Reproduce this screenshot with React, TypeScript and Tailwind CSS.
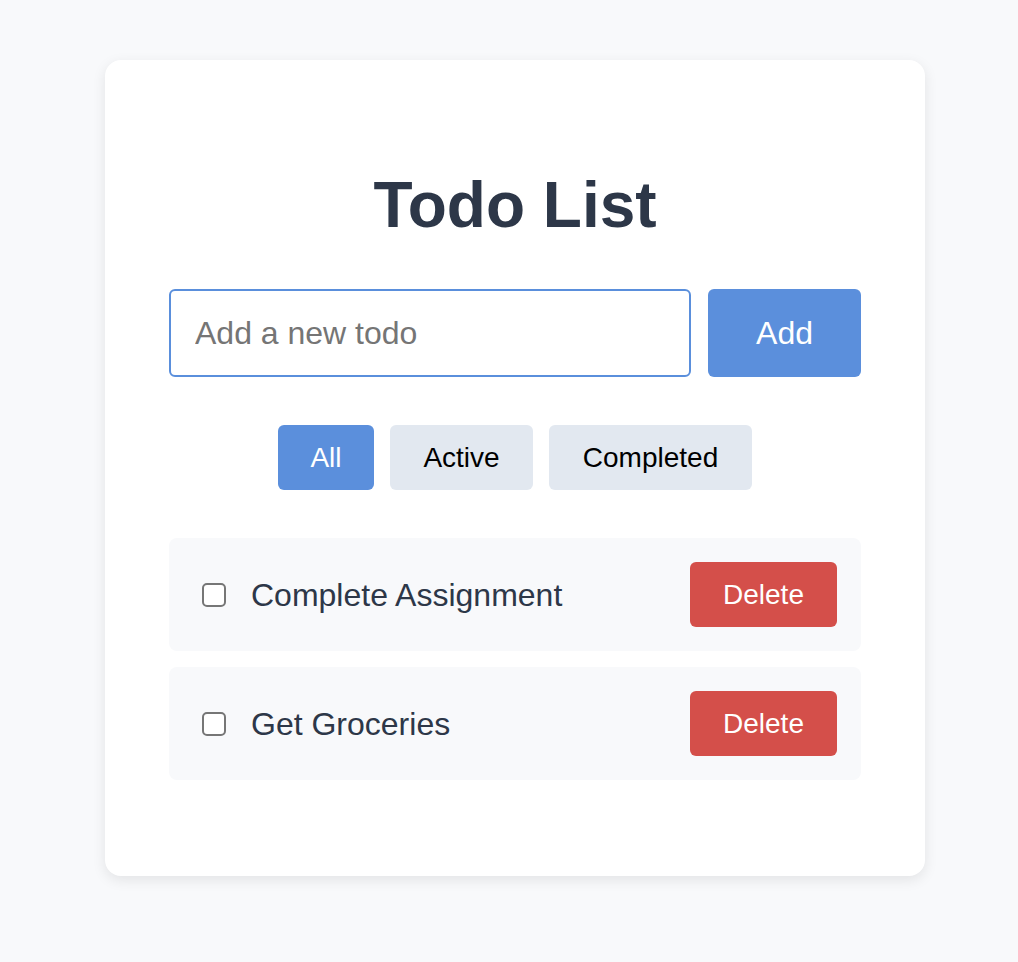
import React, { useState } from 'react';

type Todo = { id: number; text: string; done: boolean };

const filters = [
  { label: 'All', width: 'w-[96px]' },
  { label: 'Active', width: 'w-[143px]' },
  { label: 'Completed', width: 'w-[203px]' },
];

const App = () => {
  const [todos, setTodos] = useState<Todo[]>([
    { id: 1, text: 'Complete Assignment', done: false },
    { id: 2, text: 'Get Groceries', done: false },
  ]);
  const [draft, setDraft] = useState('');
  const [filter, setFilter] = useState('All');

  const addTodo = () => {
    if (!draft.trim()) return;
    setTodos([...todos, { id: Date.now(), text: draft.trim(), done: false }]);
    setDraft('');
  };

  const visible = todos.filter((t) =>
    filter === 'Active' ? !t.done : filter === 'Completed' ? t.done : true
  );

  return (
    <div className="min-h-screen bg-[#f8f9fb] flex justify-center pl-3 pt-[60px] font-['Liberation_Sans',Arial,sans-serif]">
      <div className="w-[820px] h-[816px] bg-white rounded-2xl shadow-[0_4px_14px_rgba(0,0,0,0.09)] px-16 pt-[113px]">
        {/* Title */}
        <h1 className="text-[64px] leading-none font-bold text-[#2d3748] text-center">Todo List</h1>

        {/* New todo */}
        <div className="flex gap-[17px] mt-[52px]">
          <input
            value={draft}
            onChange={(e) => setDraft(e.target.value)}
            placeholder="Add a new todo"
            className="flex-1 h-[88px] border-2 border-[#5a8fdc] rounded-md px-6 text-[32px] text-[#2d3748] placeholder:text-[#757575] outline-none"
          />
          <button
            onClick={addTodo}
            className="h-[88px] w-[153px] bg-[#5b8fdc] text-white text-[32px] rounded-md"
          >
            Add
          </button>
        </div>

        {/* Filters */}
        <div className="flex justify-center gap-4 mt-12">
          {filters.map((f) => (
            <button
              key={f.label}
              onClick={() => setFilter(f.label)}
              className={`h-[65px] ${f.width} rounded-md text-[28px] ${
                filter === f.label ? 'bg-[#5b8fdc] text-white' : 'bg-[#e2e8f0] text-black'
              }`}
            >
              {f.label}
            </button>
          ))}
        </div>

        {/* List */}
        <div className="flex flex-col gap-4 mt-12">
          {visible.map((todo) => (
            <div
              key={todo.id}
              className="h-[113px] bg-[#f8f9fb] rounded-lg flex items-center pl-8 pr-6"
            >
              <input
                type="checkbox"
                checked={todo.done}
                onChange={() =>
                  setTodos(todos.map((t) => (t.id === todo.id ? { ...t, done: !t.done } : t)))
                }
                className="appearance-none w-6 h-6 ml-px border-2 border-[#767676] rounded-[5px] bg-white checked:bg-[#5b8fdc] checked:border-[#5b8fdc]"
              />
              <span
                className={`ml-[25px] flex-1 text-[32px] text-[#2d3748] ${todo.done ? 'line-through text-gray-400' : ''}`}
              >
                {todo.text}
              </span>
              <button
                onClick={() => setTodos(todos.filter((t) => t.id !== todo.id))}
                className="h-[65px] w-[147px] bg-[#d44f4a] text-white text-[28px] rounded-md"
              >
                Delete
              </button>
            </div>
          ))}
        </div>
      </div>
    </div>
  );
};

export default App;
